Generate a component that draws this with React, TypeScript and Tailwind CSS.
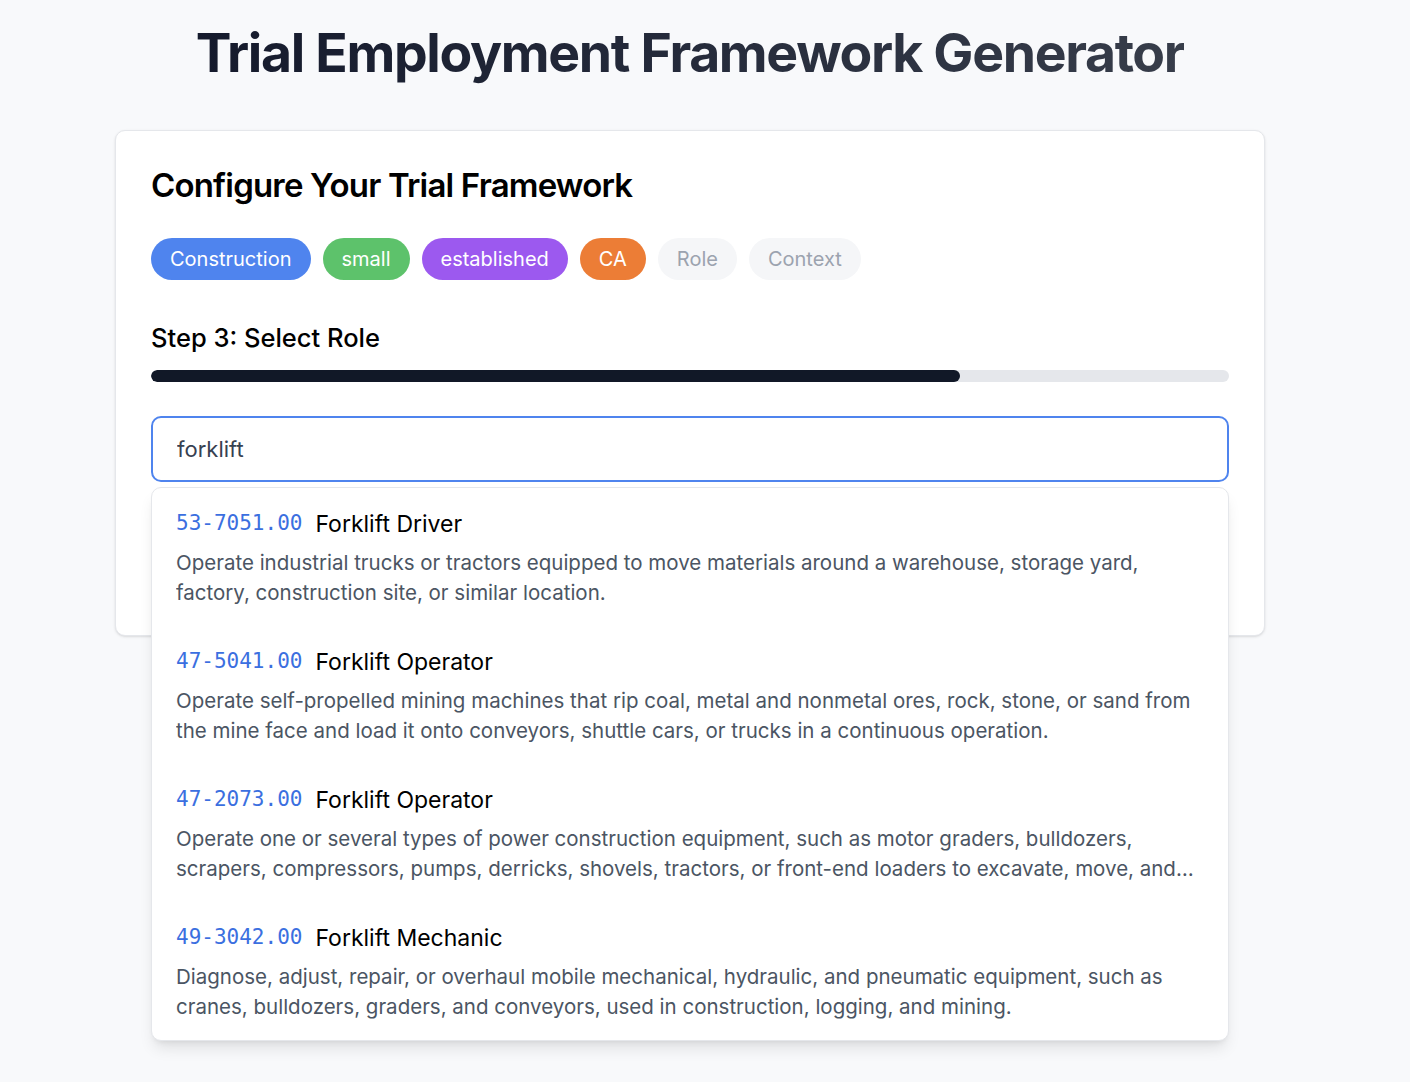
import React from "react"

type Role = {
  code: string
  title: string
  description: string
}

const roles: Role[] = [
  {
    code: "53-7051.00",
    title: "Forklift Driver",
    description:
      "Operate industrial trucks or tractors equipped to move materials around a warehouse, storage yard, factory, construction site, or similar location.",
  },
  {
    code: "47-5041.00",
    title: "Forklift Operator",
    description:
      "Operate self-propelled mining machines that rip coal, metal and nonmetal ores, rock, stone, or sand from the mine face and load it onto conveyors, shuttle cars, or trucks in a continuous operation.",
  },
  {
    code: "47-2073.00",
    title: "Forklift Operator",
    description:
      "Operate one or several types of power construction equipment, such as motor graders, bulldozers, scrapers, compressors, pumps, derricks, shovels, tractors, or front-end loaders to excavate, move, and grade earth, erect structures, or pour concrete or other hard surface pavement.",
  },
  {
    code: "49-3042.00",
    title: "Forklift Mechanic",
    description:
      "Diagnose, adjust, repair, or overhaul mobile mechanical, hydraulic, and pneumatic equipment, such as cranes, bulldozers, graders, and conveyors, used in construction, logging, and mining.",
  },
]

const chips = [
  { label: "Construction", cls: "bg-[#4f84ee] text-white" },
  { label: "small", cls: "bg-[#5dc26b] text-white" },
  { label: "established", cls: "bg-[#9c59ef] text-white" },
  { label: "CA", cls: "bg-[#ec7d36] text-white" },
  { label: "Role", cls: "bg-[#f5f6f8] text-[#9ca3af]" },
  { label: "Context", cls: "bg-[#f5f6f8] text-[#9ca3af]" },
]

function RoleOption({ role }: { role: Role }) {
  return (
    <div className="px-6 pt-[21px] pb-[18px] cursor-pointer hover:bg-gray-50">
      <div className="flex items-center h-[30px]">
        <span className="font-['DejaVu_Sans_Mono',monospace] text-[21px] text-[#3b6fe0]">{role.code}</span>
        <span className="ml-[13px] text-[23px] text-black">{role.title}</span>
      </div>
      <p className="mt-[9px] text-[20.5px] leading-[30px] text-[#4b5563] line-clamp-2">{role.description}</p>
    </div>
  )
}

export default function App() {
  return (
    <div className="min-h-screen bg-[#f8f9fb] font-['Inter',sans-serif] pr-[30px]">
      <h1 className="pt-[21px] text-center text-[53.5px] leading-[64px] font-bold tracking-tight bg-gradient-to-r from-[#151a2c] to-[#373d4a] bg-clip-text text-transparent w-fit mx-auto">
        Trial Employment Framework Generator
      </h1>

      <div className="mt-[45px] mx-auto w-[1150px] bg-white border border-[#e5e7eb] rounded-[10px] shadow-sm px-[35px] pt-[32px] pb-[153px]">
        <h2 className="text-[33px] leading-[44px] font-semibold tracking-tight text-black">
          Configure Your Trial Framework
        </h2>

        <div className="mt-[31px] flex gap-3">
          {chips.map((c) => (
            <span key={c.label} className={`h-[42px] px-[19px] rounded-full flex items-center text-[20px] ${c.cls}`}>
              {c.label}
            </span>
          ))}
        </div>

        <h3 className="mt-[42px] text-[25.5px] leading-[32px] font-medium text-black">Step 3: Select Role</h3>

        <div className="mt-[16px] h-3 w-full rounded-full bg-[#e5e7eb] overflow-hidden">
          <div className="h-full w-[75%] rounded-full bg-[#111827]" />
        </div>

        <div className="relative mt-[34px]">
          <input
            readOnly
            value="forklift"
            className="w-full h-[66px] rounded-[10px] border-2 border-[#4f84ee] px-6 text-[22px] text-[#374151] outline-none"
          />
          <div className="absolute left-0 right-0 top-full mt-[5px] bg-white border border-[#e5e7eb] rounded-[10px] shadow-lg z-10">
            {roles.map((r) => (
              <RoleOption key={r.code} role={r} />
            ))}
          </div>
        </div>
      </div>
    </div>
  )
}
